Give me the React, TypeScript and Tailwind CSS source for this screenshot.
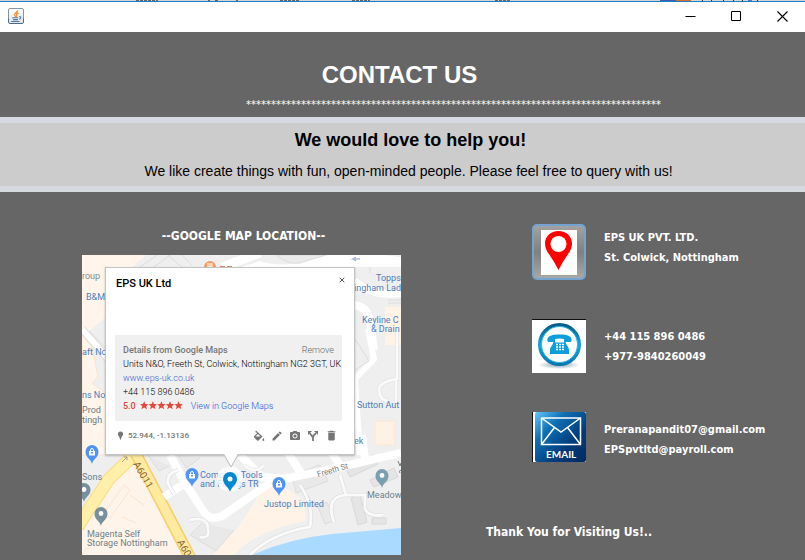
import React from "react";
import { LuX } from "react-icons/lu";
import { MdEdit, MdPhotoCamera, MdDelete } from "react-icons/md";

const labelFont = "font-['DejaVu_Sans_Condensed','Noto_Sans',sans-serif] font-bold text-white";

function JavaIcon() {
  return (
    <svg width="16" height="16" viewBox="0 0 16 16" aria-hidden="true">
      <defs>
        <linearGradient id="javaBg" x1="0" y1="0" x2="0" y2="1">
          <stop offset="0" stopColor="#ffffff" />
          <stop offset="1" stopColor="#dfe4ea" />
        </linearGradient>
      </defs>
      <rect x="0.5" y="0.5" width="15" height="15" rx="1.5" fill="url(#javaBg)" stroke="#8496a6" />
      <path d="M0.5 10.5v4l1 1h13l1-1v-4" fill="none" stroke="#4d6a86" />
      <path d="M9.6 2.4c.6 1.6-3.2 2.6-3 4.4.1.8.8 1.4 1.2 2M10.6 4.9c-1.2.5-2.4 1.2-1.9 2.2.3.5.3 1-.3 1.7" fill="none" stroke="#ee8420" strokeWidth="1.2" />
      <path d="M4.2 9.7h6M5 11.6h5M3.2 13.5h8.4M11 8.8c2.4-.6 2.6 1.6.2 2.4" fill="none" stroke="#4f7ca3" strokeWidth="1.1" />
    </svg>
  );
}

function WindowBar() {
  const control = "flex h-[29px] w-[46px] items-center justify-center text-black hover:bg-gray-200";
  return (
    <header>
      <svg className="block h-px w-full" viewBox="0 0 805 1" preserveAspectRatio="none" aria-hidden="true">
        <rect width="805" height="1" fill="#d4d4d4" />
        <path d="M136 .5h22M208 .5h2M215 .5h4M236 .5h2M280 .5h20M352 .5h18M495 .5h16" stroke="#666" strokeDasharray="3 1" />
        <rect x="660" width="16" height="1" fill="#3f5fae" />
        <rect x="676" width="15" height="1" fill="#d0702f" />
        <path d="M702 .5h1M711 .5h1M723 .5h1M733 .5h1M742 .5h1M757 .5h1" stroke="#333" />
        <rect x="748" width="4" height="1" fill="#4f78c0" />
      </svg>
      <div className="flex h-[31px] items-start justify-between border-t border-[#1c7fc4] bg-white pl-2">
        <div className="pt-[6px]"><JavaIcon /></div>
        <div className="flex">
          <button type="button" aria-label="Minimize" className={control}>
            <svg width="11" height="11" viewBox="0 0 11 11"><path d="M.5 5.5h10" stroke="currentColor" /></svg>
          </button>
          <button type="button" aria-label="Maximize" className={control}>
            <svg width="11" height="11" viewBox="0 0 11 11"><path d="M.5 .5h9v9h-9z" fill="none" stroke="currentColor" /></svg>
          </button>
          <button type="button" aria-label="Close" className={control}>
            <svg width="11" height="11" viewBox="0 0 11 11"><path d="M.5 .5l10 10M10.5 .5l-10 10" stroke="currentColor" strokeWidth="1.1" /></svg>
          </button>
        </div>
      </div>
    </header>
  );
}

function Pin({ x, y, color, bag }: { x: number; y: number; color: string; bag?: boolean }) {
  return (
    <g transform={`translate(${x} ${y})`}>
      <path d="M0 10C-1 5-6.500 4-6.500-2.500a6.500 6.500 0 0 1 13 0C6.500 4 1 5 0 10z" fill={color} />
      {bag ? (
        <>
          <rect x="-3" y="-3" width="6" height="4.500" fill="#fff" />
          <path d="M-1.500-3v-1a1.500 1.500 0 0 1 3 0v1" fill="none" stroke="#fff" />
          <rect x="-1" y="-2" width="2" height="1.500" fill={color} />
        </>
      ) : (
        <circle cy="-2.500" r="2.400" fill="#fff" />
      )}
    </g>
  );
}

function MapDrawing() {
  return (
    <svg className="block w-full" viewBox="0 0 319 300" role="img" aria-label="Street map of Colwick, Nottingham">
      <rect width="319" height="300" fill="#efefef" />
      <path d="M0 0H64L24 36V62L0 48z" fill="#fff5ea" />
      <path d="M0 74L30 106M0 68L30 100" stroke="#ddd" strokeWidth="1" />
      <path d="M0 24V82L24 62V20z" fill="#fff5ea" />
      <path d="M0 80L10 92 16 122 10 128 26 140V200H0z" fill="#fff5ea" stroke="#fbe3cc" />
      <path d="M0 74L26 104" stroke="#ddd" strokeWidth="8" />
      <path d="M0 74L26 104" stroke="#fff" strokeWidth="6" />
      <path d="M58 12L84 -6M72 12L96 -6M86 0l16 14M98 -2l12 12" stroke="#ddd" fill="none" />
      <path d="M140 12L178 -2" stroke="#fff" strokeWidth="9" />
      <path d="M178 6Q200 14 230 4T319 2V12H160z" fill="#fff" />
      <path d="M194 0Q206 10 218 8L244 0z" fill="#ebebeb" stroke="#ddd" />
      <path d="M272 50Q286 52 288 66L292 95M272 26Q290 42 319 38" fill="none" stroke="#fff" strokeWidth="8" />
      <path d="M306 45h13M306 48h13M288 12v6" stroke="#dcdcdc" />
      <path d="M303 52H319V90H303z" fill="#fff3e6" />
      <path d="M286 74L292 104 273 124 278 200" fill="none" stroke="#fff" strokeWidth="6" />
      <path d="M273 84l14 22-14 9" fill="none" stroke="#ddd" />
      <path d="M315 76v48q-19 3-18 12t8 10M314 126v22" fill="none" stroke="#ddd" strokeWidth="4" />
      <path d="M315 76v48q-19 3-18 12t8 10M314 126v22" fill="none" stroke="#fafafa" strokeWidth="3" />
      <path d="M293 166h20v24h-20z" fill="#fff2e4" stroke="#fae7d4" />
      <path d="M0 262L26 222 50 200H22L0 222z" fill="#eee" />
      <path d="M56 205L108 300H0V262L30 224z" fill="#fff4e9" />
      <path d="M22 258l20-28 6 5-20 28zM40 262l14 6M82 272h14M48 240l14 10M0 300l20-26" fill="none" stroke="#fae4d0" />
      <path d="M54 198L27 224 2 262-4 272" fill="none" stroke="#f8dc84" strokeWidth="13" />
      <path d="M54 198L27 224 2 262-4 272" fill="none" stroke="#ffefa8" strokeWidth="11" />
      <path d="M54 199L110 306" fill="none" stroke="#f5cf6a" strokeWidth="12" />
      <path d="M54 199L110 306" fill="none" stroke="#ffeaa0" strokeWidth="9" />
      <path d="M40 207l5-5m-3 0h3v3" fill="none" stroke="#a3a393" />
      <path d="M158 270L188 222 216 241Q226 254 223 266 180 274 158 294L152 300H130z" fill="#fff3e7" />
      <path d="M66 200l11 16 10-5M96 200l8 13 14-10M120 268l-12 12 26 16 18-21M210 220l28-10 8 16-32 12zM236 252l7 17 9-3-7-19z" fill="#e9e9e9" stroke="#ddd" />
      <path d="M269 243l9-3 7 27-9 3zM290 263h14v6h-14zM264 214l28-14 4 9-28 13zM288 225l24-12 4 9-24 10z" fill="#e5e5e5" stroke="#d8d8d8" />
      <path d="M82 242L103 228 88 200M103 228L122 257Q128 266 140 261L188 228M180 222L202 224 250 214 319 198M158 200l24 24M206 198l15 23M250 198l9 14M280 180l3 24" fill="none" stroke="#fff" strokeWidth="8" />
      <path d="M108 265q18-4 18 9 2 10-8 8M96 215q-12 4-10 14l6 10M162 210q12 10 20 0M218 230q14 20 10 42-38 6-60 28M258 220l6 20M252 267q-10-28 16-27l15 0v14q4 8 18 6" fill="none" stroke="#d8d8d8" strokeWidth="4" />
      <path d="M108 265q18-4 18 9 2 10-8 8M96 215q-12 4-10 14l6 10M162 210q12 10 20 0M218 230q14 20 10 42-38 6-60 28M258 220l6 20M252 267q-10-28 16-27l15 0v14q4 8 18 6" fill="none" stroke="#fafafa" strokeWidth="3" />
      <path d="M170 300Q205 284 250 279L319 273V300z" fill="#aadaff" />
      <g fontFamily="Roboto, sans-serif" fontSize="9" fill="#4e7dbb">
        <text x="0" y="24" fill="#7e8e96">roup</text>
        <text x="4" y="45">B&amp;M</text>
        <text x="294" y="26">Topps</text>
        <text x="272" y="36">ingham Lad</text>
        <text x="280" y="68">Keyline C</text>
        <text x="289" y="77">&amp; Drain</text>
        <text x="0" y="100">aft No</text>
        <text x="0" y="143">ns No</text>
        <text x="0" y="158" fill="#697d87">Prod</text>
        <text x="0" y="168" fill="#697d87">tingh</text>
        <text x="275" y="153">Sutton Aut</text>
        <text x="272" y="189" fill="#61808e">ek</text>
        <text x="0" y="225" fill="#697d87">Sons</text>
        <text x="118" y="223">Complete Tools</text>
        <text x="118" y="232">and Fixings TR</text>
        <text x="182" y="252">Justop Limited</text>
        <text x="5" y="282" fill="#6f8188">Magenta Self</text>
        <text x="5" y="291" fill="#6f8188">Storage Nottingham</text>
        <text x="285" y="243" fill="#6f8188">Meadow</text>
        <text x="236" y="222" fontSize="8" fill="#777" transform="rotate(-16 236 222)">Freeth St</text>
        <text x="51" y="209" fontSize="10" fill="#8a6334" transform="rotate(60 51 209)">A6011</text>
        <text x="95" y="287" fontSize="10" fill="#8a6334" transform="rotate(60 95 287)">A60</text>
      </g>
      <path d="M316 206l2 5 1-3M319 215q-3 1-1 3" fill="none" stroke="#6f8188" />
      <circle cx="128" cy="12" r="6" fill="#f79a62" />
      <path d="M126 8v4h4V8M128 8v6" fill="none" stroke="#fff" />
      <path d="M138 11.500h12" stroke="#dc8e68" strokeDasharray="5 2" />
      <path d="M281 4h-7l3-2m-3 2l3 2" transform="translate(-3 0)" fill="none" stroke="#aebbd0" strokeWidth="1.500" />
      <Pin x={10} y={199} color="#4f95f5" bag />
      <Pin x={110} y={222} color="#4f95f5" bag />
      <Pin x={197} y={231} color="#4f95f5" bag />
      <Pin x={2} y={237} color="#78909c" />
      <Pin x={19} y={261} color="#78909c" />
      <Pin x={300} y={223} color="#78a0b0" />
      <circle cx="148" cy="224" r="13" fill="#fff" fillOpacity="0.8" />
      <path d="M148 237C147 232 141 230 141 224a7 7 0 0 1 14 0C155 230 149 232 148 237z" fill="#0288d1" />
      <circle cx="148" cy="224" r="2.500" fill="#fff" />
    </svg>
  );
}

function PlaceCard() {
  return (
    <section className="absolute top-3 left-[23px] w-[250px] border border-[#c4c4c4] bg-white font-['Roboto',sans-serif] text-[9px] leading-[14px] text-black shadow-[0_1px_2px_rgba(0,0,0,0.25)]">
      <div className="flex items-start justify-between pt-2 pr-2 pl-[10px]">
        <h3 className="text-[11px] leading-[15px] font-medium">EPS UK Ltd</h3>
        <button type="button" aria-label="Close details" className="text-[#555]"><LuX size={8} strokeWidth={3} /></button>
      </div>
      <div className="mt-11 mr-3 ml-[9px] bg-[#f0f0f0] px-2 py-2 font-light">
        <div className="flex justify-between">
          <span className="font-medium text-[#777]">Details from Google Maps</span>
          <button type="button" className="text-[#666]">Remove</button>
        </div>
        <p className="whitespace-nowrap">Units N&amp;O, Freeth St, Colwick, Nottingham NG2 3GT, UK</p>
        <a href="#site" className="block text-[#3f62cf]">www.eps-uk.co.uk</a>
        <p>+44 115 896 0486</p>
        <div className="flex gap-2 whitespace-nowrap">
          <span className="flex gap-1 font-medium text-[#db4437]">
            5.0
            <svg width="43" height="14" viewBox="0 0 43 14" fill="#e0493b" aria-label="Five stars" role="img">
              {[0, 1, 2, 3, 4].map((i) => (
                <path key={i} transform={`translate(${i * 8.6} 2)`} d="M4.200 .2l1.200 2.900 3.100 .1-2.400 2 .9 3.100-2.800-1.800-2.800 1.800.9-3.100L-.1 3.200l3.100-.1z" />
              ))}
            </svg>
          </span>
          <a href="#map" className="text-[#2458dc]">View in Google Maps</a>
        </div>
      </div>
      <div className="flex h-[33px] items-center justify-between pr-4 pb-1 pl-[11px] text-[#757575]">
        <span className="flex items-center gap-1 text-[8px] font-medium">
          <svg width="7" height="9" viewBox="0 0 7 9" fill="currentColor" aria-hidden="true">
            <path d="M3.500 .5a2.600 2.600 0 0 1 2.600 2.600C6.100 5 4.200 5.500 4 8.500H3C2.800 5.500.9 5 .9 3.100A2.600 2.600 0 0 1 3.500 .5z" />
          </svg>
          52.944, -1.13136
        </span>
        <span className="flex gap-[6px]">
          <button type="button" aria-label="Style">
            <svg width="12" height="12" viewBox="0 0 12 12" fill="currentColor">
              <path d="M3 .6l6.500 6-4 3.900q-.7.500-1.400 0L1.200 7.500q-.6-.7 0-1.400L4.200 3.300 2.300 1.400zM5 4.100L2.500 6.600h5zM10.300 8q1.400 1.900.9 2.600-.9.900-1.800 0Q9 9.800 10.300 8z" fillRule="evenodd" />
            </svg>
          </button>
          <button type="button" aria-label="Edit"><MdEdit size={12} /></button>
          <button type="button" aria-label="Add photo"><MdPhotoCamera size={12} /></button>
          <button type="button" aria-label="Directions">
            <svg width="12" height="12" viewBox="0 0 12 12" fill="currentColor">
              <path d="M6 11V7.500L2.800 3.300M6 7.500Q6.300 5 9 3.300" fill="none" stroke="currentColor" strokeWidth="1.800" />
              <path d="M1 1h4L1 5zM7 1h4v4z" />
            </svg>
          </button>
          <button type="button" aria-label="Delete"><MdDelete size={13} /></button>
        </span>
      </div>
      <svg className="absolute top-full left-[117px]" width="16" height="14" viewBox="0 0 16 14" aria-hidden="true">
        <path d="M0-1L8 13 16-1z" fill="#fff" stroke="#bbb" />
      </svg>
    </section>
  );
}

function PhoneDrawing() {
  return (
    <svg width="54" height="54" viewBox="0 0 54 54" aria-hidden="true">
      <defs>
        <linearGradient id="ring" x1="0" y1="0" x2="0" y2="1">
          <stop offset="0" stopColor="#065a8c" />
          <stop offset="0.500" stopColor="#12a5e0" />
          <stop offset="1" stopColor="#0877ae" />
        </linearGradient>
        <radialGradient id="shade">
          <stop offset="0" stopColor="#8aa2b0" />
          <stop offset="1" stopColor="#ffffff" />
        </radialGradient>
      </defs>
      <rect width="54" height="54" fill="#fff" />
      <rect width="54" height="1" fill="#111" />
      <ellipse cx="27" cy="46" rx="21" ry="4" fill="url(#shade)" />
      <circle cx="27.500" cy="25.500" r="19.500" fill="#fff" stroke="url(#ring)" strokeWidth="4" />
      <circle cx="27.500" cy="25.500" r="18" fill="#fff" stroke="#28b4ec" />
      <path d="M15.500 22c-1-5 4-6.500 12-6.500s13 1.500 12 6.500q-.2 1-1.500 1h-4.500q-1.500 0-1.500-2v-1q-4.500-1-9 0v1q0 2-1.500 2h-4.500q-1.300 0-1.500-1z" fill="#0c9edc" />
      <path d="M23 21.500v2h9v-2h1.500c0 5 3.500 6 3.500 9.500v4H18v-4c0-3.500 3.500-4.500 3.500-9.500z" fill="#0c9edc" />
      <path d="M24 25.500h8M24 28h8M24 30.500h8" stroke="#fff" strokeWidth="1.500" strokeDasharray="2 1" />
    </svg>
  );
}

function EmailDrawing() {
  return (
    <svg width="54" height="50" viewBox="0 0 54 50" role="img" aria-label="Email">
      <defs>
        <linearGradient id="mail" x1="0" y1="0" x2="1" y2="1">
          <stop offset="0" stopColor="#62c8ff" />
          <stop offset="0.300" stopColor="#0f70b4" />
          <stop offset="0.650" stopColor="#023d7d" />
          <stop offset="1" stopColor="#012a5e" />
        </linearGradient>
      </defs>
      <rect width="54" height="50" fill="#fff" />
      <rect width="1" height="50" fill="#111" />
      <rect x="3" width="51" height="50" rx="2" fill="url(#mail)" />
      <path d="M9.500 6h39v26.500h-39zM9.500 6L29 20 48.500 6M9.500 32.500L22.500 15.500M48.500 32.500L35.500 15.500" fill="none" stroke="#fff" strokeWidth="1.500" />
      <text x="14" y="46" fontFamily="Lato, sans-serif" fontWeight="700" fontSize="10" fill="#fff">EMAIL</text>
    </svg>
  );
}

function ContactRow({ icon, label, lines, framed }: { icon: React.ReactNode; label: string; lines: string[]; framed?: boolean }) {
  return (
    <li className={`flex items-start ${framed ? "" : "pt-[39px]"}`}>
      <button
        type="button"
        aria-label={label}
        className={
          framed
            ? "flex h-14 w-[54px] shrink-0 items-center justify-center rounded-[5px] border-2 border-[#73a4d1] bg-linear-to-b from-[#a2a2a2] via-[#808080] to-[#a8a8a8]"
            : "w-[54px] shrink-0"
        }
      >
        {icon}
      </button>
      <div className={`${labelFont} pl-[18px] text-[11px] leading-5 ${framed ? "pt-1" : "pt-2"}`}>
        {lines.map((line) => (
          <p key={line}>{line}</p>
        ))}
      </div>
    </li>
  );
}

export default function App() {
  return (
    <div className="min-h-screen bg-[#666] font-['Liberation_Sans',Arial,sans-serif]">
      <WindowBar />
      <div className="h-[85px] pt-7 text-center text-white">
        <h1 className="pr-[6px] text-[24px] leading-[30px] font-bold">CONTACT US</h1>
        <p className="pt-[7px] pl-[102px] font-['DejaVu_Sans',sans-serif] text-[10px] leading-[16px]" aria-hidden="true">{"*".repeat(83)}</p>
      </div>
      <section className="border-y-[6px] border-[#d6d9df] bg-[#ccc] pt-1 pb-1 pl-4 text-center text-black">
        <h2 className="text-[18px] leading-[26px] font-bold">We would love to help you!</h2>
        <p className="pt-[7px] pr-1 text-[14px] leading-[22px]">We like create things with fun, open-minded people. Please feel free to query with us!</p>
      </section>
      <main className="flex gap-[85px] pl-[82px]">
        <section className="w-[319px] shrink-0 pt-[34px]">
          <h2 className={`${labelFont} pb-[9px] pl-1 text-center text-[12px] leading-5`}>--GOOGLE MAP LOCATION--</h2>
          <div className="relative">
            <MapDrawing />
            <PlaceCard />
          </div>
        </section>
        <section className="pt-8">
          <ul className="flex flex-col pl-[46px]">
            <ContactRow
              framed
              label="Location"
              lines={["EPS UK PVT. LTD.", "St. Colwick, Nottingham"]}
              icon={
                <svg width="36" height="45" viewBox="0 0 36 45" aria-hidden="true">
                  <rect width="36" height="45" fill="#fff" />
                  <path d="M17.500 40Q13 31 6.500 22C0 11 7 1 17.500 1S35 11 28.500 22Q22 31 17.500 40z" fill="#f00" />
                  <circle cx="17.500" cy="14" r="8" fill="#fff" />
                </svg>
              }
            />
            <ContactRow label="Phone" lines={["+44 115 896 0486", "+977-9840260049"]} icon={<PhoneDrawing />} />
            <ContactRow label="Email" lines={["Preranapandit07@gmail.com", "EPSpvtltd@payroll.com"]} icon={<EmailDrawing />} />
          </ul>
          <p className={`${labelFont} pt-[60px] text-[12px] leading-5`}>Thank You for Visiting Us!..</p>
        </section>
      </main>
    </div>
  );
}
